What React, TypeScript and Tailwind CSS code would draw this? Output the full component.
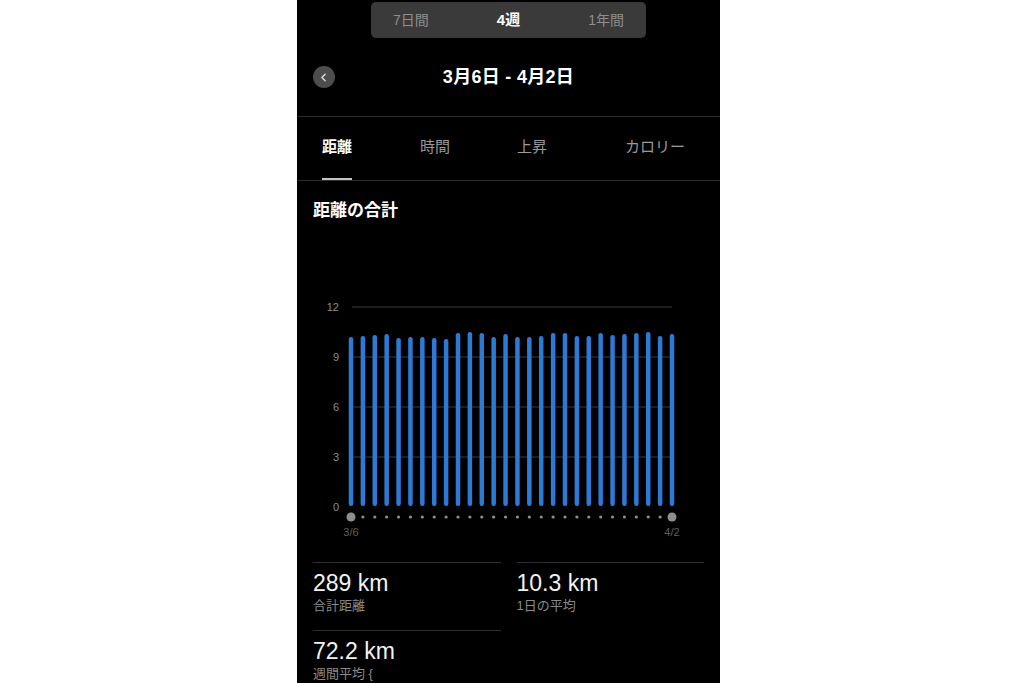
import { ChevronLeft } from 'lucide-react';

// bar heights in px, read off the 0..12 scale (16.67px per km)
const bars = [169, 170, 171, 172, 168, 169, 169, 168, 167, 173, 174, 173, 169, 172, 169, 169, 170, 173, 173, 170, 170, 173, 171, 172, 173, 174, 170, 172];

const font = { fontFamily: '"Liberation Sans", "Noto Sans CJK JP", sans-serif' };

function Chart() {
  const base = 215;
  const x0 = 54;
  const step = (375 - 54) / 27;
  const ticks = [
    { label: '12', y: 16 },
    { label: '9', y: 66 },
    { label: '6', y: 116 },
    { label: '3', y: 166 },
    { label: '0', y: 216 },
  ];

  return (
    <svg width="423" height="255" viewBox="0 0 423 255" className="block mt-[68px]" style={font}>
      {ticks.map((t) => (
        <g key={t.label}>
          {t.label !== '0' && <line x1="55" x2="375" y1={t.y} y2={t.y} stroke="#3a3a3a" strokeWidth="1" />}
          <text x="42" y={t.y + 4} textAnchor="end" fontSize="11" fill="#8c8c8c">
            {t.label}
          </text>
        </g>
      ))}
      {bars.map((h, i) => (
        <rect key={i} x={x0 + i * step - 2.25} y={base - h} width="4.5" height={h} rx="2.2" fill="#2d7ad6" />
      ))}
      {bars.map((_, i) => {
        const end = i === 0 || i === bars.length - 1;
        return <circle key={i} cx={x0 + i * step} cy="226" r={end ? 4.5 : 1.6} fill="#8e8e8e" />;
      })}
      <text x="54" y="245" textAnchor="middle" fontSize="11" fill="#5f5f5f">3/6</text>
      <text x="375" y="245" textAnchor="middle" fontSize="11" fill="#5f5f5f">4/2</text>
    </svg>
  );
}

function Stat({ value, label }: { value: string; label: string }) {
  return (
    <div className="border-t border-[#2e2e2e] pt-[6px] pb-[15px]">
      <p className="text-[23px] leading-[28px] text-[#f2f2f2]">{value}</p>
      <p className="text-[13px] leading-[18px] text-[#8a8a8a]">{label}</p>
    </div>
  );
}

export default function App() {
  const tabs = [
    { label: '距離', active: true, ml: 'ml-0' },
    { label: '時間', active: false, ml: 'ml-[68px]' },
    { label: '上昇', active: false, ml: 'ml-[67px]' },
    { label: 'カロリー', active: false, ml: 'ml-[78px]' },
  ];

  return (
    <div className="min-h-[683px] bg-white" style={font}>
      <div className="ml-[297px] w-[423px] h-[683px] overflow-hidden bg-black text-white">
        {/* period switch */}
        <div className="pt-[2px] flex justify-center">
          <div className="w-[275px] h-[36px] rounded-[5px] bg-[#3a3a3a] flex items-center justify-between px-[22px]">
            <span className="text-[14px] text-[#8f8f8f]">7日間</span>
            <span className="text-[15px] font-bold text-white">4週</span>
            <span className="text-[14px] text-[#8f8f8f]">1年間</span>
          </div>
        </div>

        {/* date range header */}
        <div className="h-[79px] border-b border-[#2e2e2e] grid grid-cols-[1fr_auto_1fr] items-center px-4">
          <button className="w-[22px] h-[22px] rounded-full bg-[#4d4d4d] flex items-center justify-center">
            <ChevronLeft size={13} strokeWidth={2.4} className="text-[#e0e0e0] -ml-[1px]" />
          </button>
          <h1 className="text-[18px] font-bold tracking-[0.3px]">3月6日 - 4月2日</h1>
          <div />
        </div>

        {/* metric tabs */}
        <div className="h-[64px] border-b border-[#2e2e2e] flex pl-[25px]">
          {tabs.map((t) => (
            <button
              key={t.label}
              className={`${t.ml} h-full flex items-center border-b-2 text-[15px] ${
                t.active ? 'border-[#c4c4c4] text-white font-semibold' : 'border-transparent text-[#9a9a9a]'
              }`}
            >
              {t.label}
            </button>
          ))}
        </div>

        <h2 className="pt-[18px] px-4 text-[17px] leading-[24px] font-bold">距離の合計</h2>

        <Chart />

        <div className="mt-[16px] px-4 grid grid-cols-2 gap-x-4">
          <Stat value="289 km" label="合計距離" />
          <Stat value="10.3 km" label="1日の平均" />
          <Stat value="72.2 km" label="週間平均 {" />
        </div>
      </div>
    </div>
  );
}
